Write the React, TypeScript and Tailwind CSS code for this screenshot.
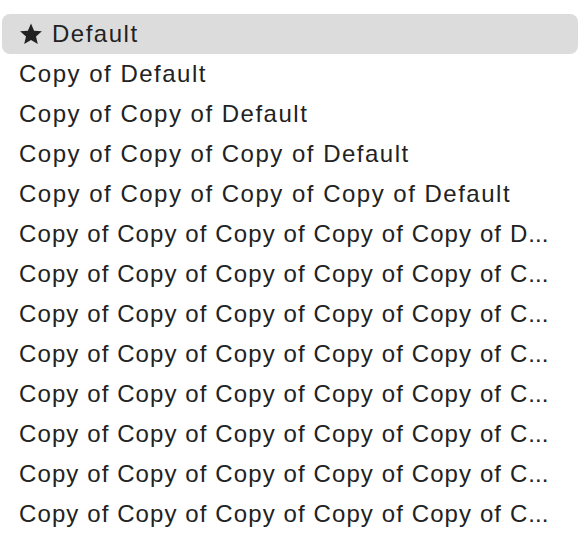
import React from "react";

const full = (n: number) => Array(n).fill("Copy of ").join("") + "Default";

const rows: { name: string; shown: string; cut: boolean }[] = [];
for (let n = 1; n <= 12; n++) {
  const name = full(n);
  if (n < 5) rows.push({ name, shown: name, cut: false });
  else if (n === 5)
    rows.push({ name, shown: "Copy of Copy of Copy of Copy of Copy of D", cut: true });
  else rows.push({ name, shown: "Copy of Copy of Copy of Copy of Copy of C", cut: true });
}

export default function App() {
  return (
    <div
      className="w-[588px] h-[558px] bg-white pt-[14px] px-[2px] text-[24px] tracking-[1.5px] text-[#222222]"
      style={{ fontFamily: "'Liberation Sans', Arial, sans-serif" }}
    >
      <div className="w-[576px] h-[40px] rounded-[8px] bg-[#dcdcdc] flex items-center pl-[17px]">
        <svg width="24" height="24" viewBox="0 0 24 24" className="mr-[9px]">
          <path
            d="M12 1.5l3.1 7.2 7.8.6-5.9 5.1 1.8 7.6L12 18l-6.8 4 1.8-7.6-5.9-5.1 7.8-.6z"
            fill="#222222"
          />
        </svg>
        <span>Default</span>
      </div>
      {rows.map((r, i) => (
        <div key={i} className="h-[40px] flex items-center pl-[17px]" title={r.name}>
          <span className={r.cut ? "whitespace-nowrap tracking-[1.1px]" : "whitespace-nowrap"}>
            {r.shown}
            {r.cut && <span className="tracking-[0px]">...</span>}
          </span>
        </div>
      ))}
    </div>
  );
}
